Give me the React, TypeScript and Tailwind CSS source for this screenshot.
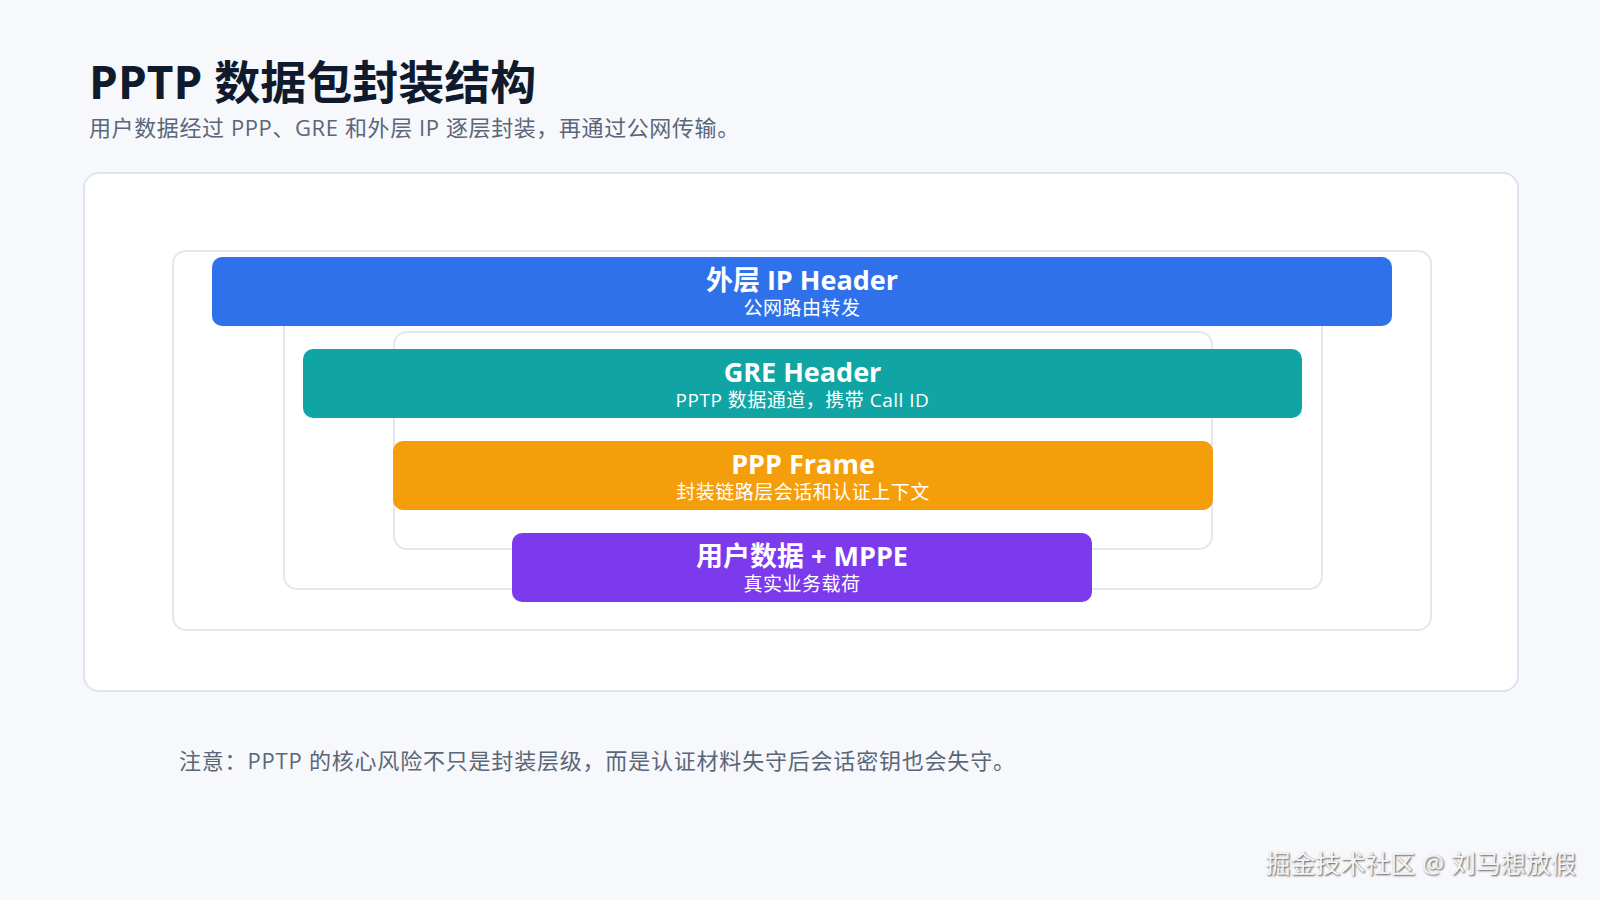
export default function App() {
  const f = { fontFamily: '"Segoe UI","Open Sans","Noto Sans CJK SC",sans-serif' };
  const bar = "absolute flex flex-col items-center justify-center rounded-[10px] text-white h-[69px]";
  const box = "absolute rounded-[14px] border-2 border-[#e2e8f0]";
  return (
    <div style={f} className="w-[1600px] h-[900px] bg-[#f6f8fc] relative overflow-hidden">
      <div className="pl-[89px] pt-[52px]">
        <h1 className="text-[46px] font-bold text-[#0f1b2d] leading-[58px]">PPTP 数据包封装结构</h1>
        <p className="text-[22px] tracking-[0.6px] text-[#5b6678] leading-[30px] mt-[2px]">用户数据经过 PPP、GRE 和外层 IP 逐层封装，再通过公网传输。</p>
      </div>
      <div className="absolute left-[83px] top-[172px] w-[1436px] h-[520px] bg-white rounded-[16px] border-2 border-[#dde4ee]">
        <div className={box} style={{ left: 87, top: 76, width: 1260, height: 381 }} />
        <div className={box} style={{ left: 198, top: 130, width: 1040, height: 286 }} />
        <div className={box} style={{ left: 308, top: 157, width: 820, height: 219 }} />
        <div className={bar + " bg-[#2f71ea]"} style={{ left: 127, top: 83, width: 1180 }}>
          <div className="text-[27px] font-bold leading-[32px]">外层 IP Header</div>
          <div className="text-[19px] tracking-[0.5px] leading-[24px]">公网路由转发</div>
        </div>
        <div className={bar + " bg-[#10a5a4]"} style={{ left: 218, top: 175, width: 999 }}>
          <div className="text-[27px] font-bold leading-[32px]">GRE Header</div>
          <div className="text-[19px] tracking-[0.5px] leading-[24px]">PPTP 数据通道，携带 Call ID</div>
        </div>
        <div className={bar + " bg-[#f49e0c]"} style={{ left: 308, top: 267, width: 820 }}>
          <div className="text-[27px] font-bold leading-[32px]">PPP Frame</div>
          <div className="text-[19px] tracking-[0.5px] leading-[24px]">封装链路层会话和认证上下文</div>
        </div>
        <div className={bar + " bg-[#7c3aed]"} style={{ left: 427, top: 359, width: 580 }}>
          <div className="text-[27px] font-bold leading-[32px]">用户数据 + MPPE</div>
          <div className="text-[19px] tracking-[0.5px] leading-[24px]">真实业务载荷</div>
        </div>
      </div>
      <p className="absolute left-[179px] top-[744px] text-[22px] tracking-[0.8px] text-[#5b6678]">注意：PPTP 的核心风险不只是封装层级，而是认证材料失守后会话密钥也会失守。</p>
      <div className="absolute right-[24px] top-[845px] text-[25px] text-[#f4f4f4] [text-shadow:1px_1px_2px_#555]">掘金技术社区 @ 刘马想放假</div>
    </div>
  );
}
